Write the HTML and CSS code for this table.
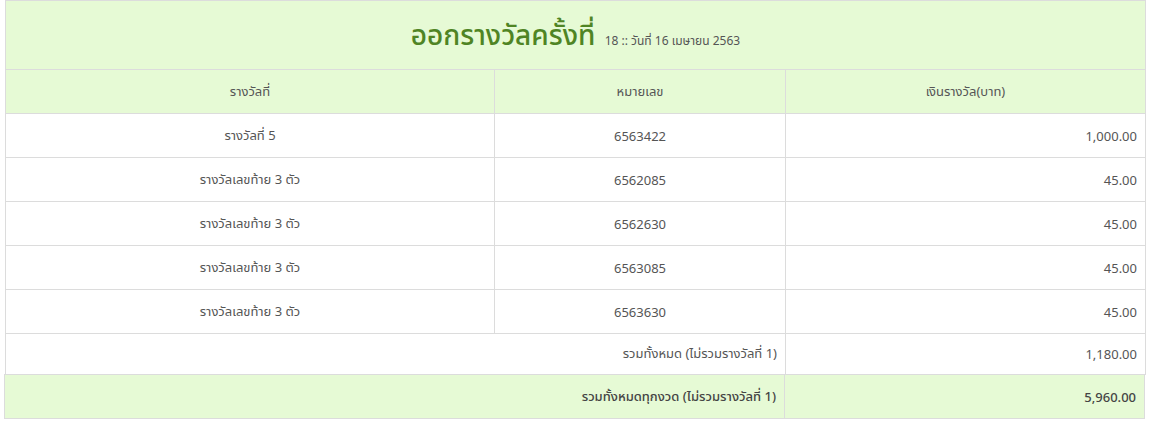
FILE: index.html
```html
<!DOCTYPE html>
<html lang="th">
<head>
<meta charset="utf-8">
<title>ออกรางวัล</title>
<link rel="stylesheet" href="styles.css">
</head>
<body>
<div class="wrap">
<table class="prize">
  <colgroup><col class="c1"><col class="c2"><col class="c3"></colgroup>
  <thead>
    <tr class="title-row"><th colspan="3"><span class="big">ออกรางวัลครั้งที่</span> <span class="small">18 :: วันที่ 16 เมษายน 2563</span></th></tr>
    <tr class="head-row"><th>รางวัลที่</th><th>หมายเลข</th><th>เงินรางวัล(บาท)</th></tr>
  </thead>
  <tbody>
    <tr><td class="ctr">รางวัลที่ 5</td><td class="ctr">6563422</td><td class="num">1,000.00</td></tr>
    <tr><td class="ctr">รางวัลเลขท้าย 3 ตัว</td><td class="ctr">6562085</td><td class="num">45.00</td></tr>
    <tr><td class="ctr">รางวัลเลขท้าย 3 ตัว</td><td class="ctr">6562630</td><td class="num">45.00</td></tr>
    <tr><td class="ctr">รางวัลเลขท้าย 3 ตัว</td><td class="ctr">6563085</td><td class="num">45.00</td></tr>
    <tr><td class="ctr">รางวัลเลขท้าย 3 ตัว</td><td class="ctr">6563630</td><td class="num">45.00</td></tr>
    <tr class="sum-row"><td colspan="2" class="num">รวมทั้งหมด (ไม่รวมรางวัลที่ 1)</td><td class="num">1,180.00</td></tr>
  </tbody>
</table>
<table class="grand">
  <tr><td class="num gl">รวมทั้งหมดทุกงวด (ไม่รวมรางวัลที่ 1)</td><td class="num">5,960.00</td></tr>
</table>
</div>
</body>
</html>
```
FILE: styles.css
```css
html, body {
  margin: 0;
  padding: 0;
  background: #fff;
}
body {
  font-family: "Noto Sans", "Noto Sans Thai", "Liberation Sans", sans-serif;
  font-size: 13px;
  color: #555;
}
.wrap {
  padding: 0 6px 0 4px;
}
table {
  border-collapse: collapse;
}
.prize {
  width: 1140px;
  margin-left: 1px;
  table-layout: fixed;
}
.c1 { width: 489px; }
.c2 { width: 291px; }
.c3 { width: 360px; }
th, td {
  border: 1px solid #dcdcdc;
  padding: 0 8px;
  font-weight: normal;
}
.title-row th {
  height: 66px;
  background: #e6fad5;
  text-align: center;
  padding-top: 2px;
}
.big {
  font-size: 28px;
  font-weight: 500;
  color: #4f8424;
}
.small {
  font-size: 12px;
  color: #555;
  margin-left: 6px;
}
.head-row th {
  height: 43px;
  background: #e6fad5;
  text-align: center;
}
tbody td {
  height: 43px;
  background: #fff;
}
.ctr { text-align: center; }
.num { text-align: right; }
.sum-row td { height: 40px; }
.grand {
  width: 1141px;
  border: 1px solid #dcdcdc;
  margin-top: -1px;
}
.grand td {
  height: 43px;
  background: #e6fad5;
  font-weight: 500;
  color: #444;
}
.grand .gl { width: 763px; }
```
